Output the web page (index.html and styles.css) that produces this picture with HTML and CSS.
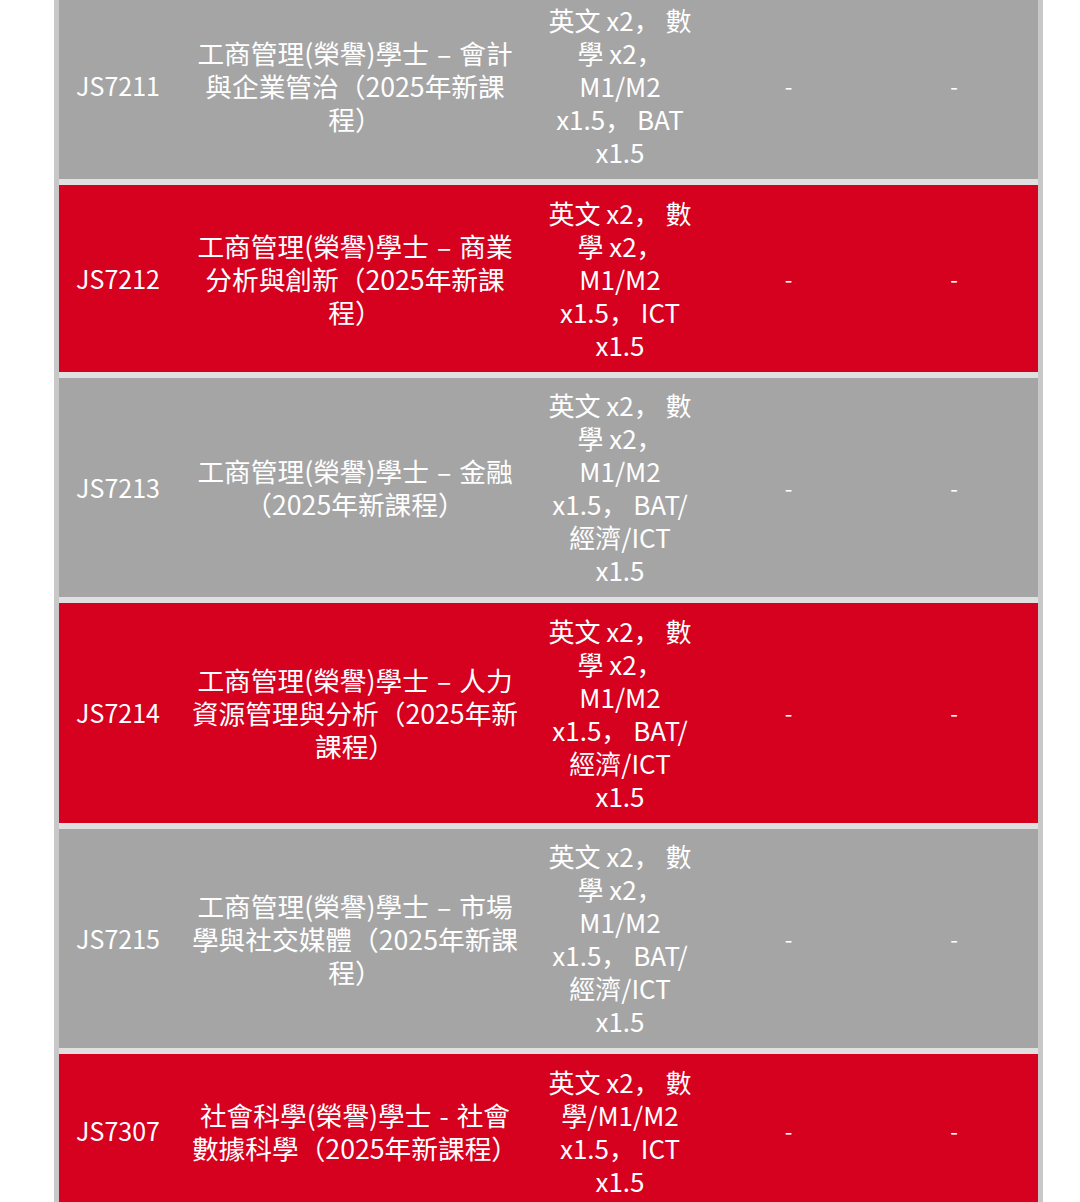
FILE: index.html
```html
<!DOCTYPE html>
<html lang="zh-Hans">
<head>
<meta charset="utf-8">
<title>課程</title>
<link rel="stylesheet" href="styles.css">
</head>
<body>
<div class="table">
  <div class="row gray">
    <div class="cell code">JS7211</div>
    <div class="cell name">工商管理(榮譽)學士 – 會計與企業管治（2025年新課程）</div>
    <div class="cell">英文 x2， 數學 x2， M1/M2 x1.5， BAT x1.5</div>
    <div class="cell dash">-</div>
    <div class="cell dash">-</div>
  </div>
  <div class="row red">
    <div class="cell code">JS7212</div>
    <div class="cell name">工商管理(榮譽)學士 – 商業分析與創新（2025年新課程）</div>
    <div class="cell">英文 x2， 數學 x2， M1/M2 x1.5， ICT x1.5</div>
    <div class="cell dash">-</div>
    <div class="cell dash">-</div>
  </div>
  <div class="row gray">
    <div class="cell code">JS7213</div>
    <div class="cell name">工商管理(榮譽)學士 – 金融（2025年新課程）</div>
    <div class="cell">英文 x2， 數學 x2， M1/M2 x1.5， BAT/經濟/ICT x1.5</div>
    <div class="cell dash">-</div>
    <div class="cell dash">-</div>
  </div>
  <div class="row red">
    <div class="cell code">JS7214</div>
    <div class="cell name">工商管理(榮譽)學士 – 人力資源管理與分析（2025年新課程）</div>
    <div class="cell">英文 x2， 數學 x2， M1/M2 x1.5， BAT/經濟/ICT x1.5</div>
    <div class="cell dash">-</div>
    <div class="cell dash">-</div>
  </div>
  <div class="row gray">
    <div class="cell code">JS7215</div>
    <div class="cell name">工商管理(榮譽)學士 – 市場學與社交媒體（2025年新課程）</div>
    <div class="cell">英文 x2， 數學 x2， M1/M2 x1.5， BAT/經濟/ICT x1.5</div>
    <div class="cell dash">-</div>
    <div class="cell dash">-</div>
  </div>
  <div class="row red">
    <div class="cell code">JS7307</div>
    <div class="cell name">社會科學(榮譽)學士 - 社會數據科學（2025年新課程）</div>
    <div class="cell">英文 x2， 數學/M1/M2 x1.5， ICT x1.5</div>
    <div class="cell dash">-</div>
    <div class="cell dash">-</div>
  </div>
</div>
</body>
</html>
```
FILE: styles.css
```css
html, body {
  margin: 0;
  padding: 0;
  background: #ffffff;
}

body {
  font-family: "Noto Sans CJK SC", "Noto Sans", sans-serif;
  color: #ffffff;
  overflow: hidden;
}

.table {
  margin: -7.5px 0 0 54px;
  width: 979px;
  border-left: 5px solid #c8c8c8;
  border-right: 5px solid #c8c8c8;
  background: #e0e0e0;
  display: flex;
  flex-direction: column;
  gap: 6px;
}

.row {
  display: grid;
  grid-template-columns: 118px 356px 174px 163px 1fr;
  align-items: center;
}

.gray {
  background: #a5a5a5;
}

.red {
  background: #d6001f;
}

.cell {
  padding: 10.75px 10px;
  font-size: 26px;
  line-height: 33px;
  text-align: center;
}

.code {
  font-size: 25px;
}

.name {
  padding-left: 11.5px;
  padding-right: 11.5px;
  font-size: 26.7px;
  word-spacing: 2px;
}

.dash {
  font-size: 22px;
}
```
